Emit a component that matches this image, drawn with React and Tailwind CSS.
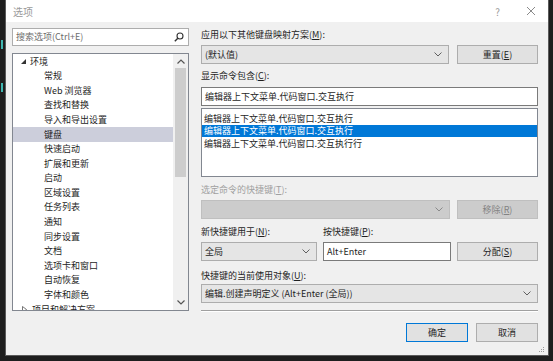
import React from 'react'

const font = { fontFamily: '"Noto Sans CJK SC", "Microsoft YaHei", sans-serif' }

const treeItems = [
  '常规',
  'Web 浏览器',
  '查找和替换',
  '导入和导出设置',
  '键盘',
  '快速启动',
  '扩展和更新',
  '启动',
  '区域设置',
  '任务列表',
  '通知',
  '同步设置',
  '文档',
  '选项卡和窗口',
  '自动恢复',
  '字体和颜色',
]

function Chevron({ color = '#606060' }) {
  return (
    <svg width="8" height="5" viewBox="0 0 8 5" className="shrink-0">
      <path d="M0.5 0.5 L4 4 L7.5 0.5" fill="none" stroke={color} strokeWidth="1" />
    </svg>
  )
}

function Combo({ children, className = '', disabled = false }) {
  return (
    <div
      className={`flex h-[19px] items-center justify-between border pl-[3px] pr-[6px] ${
        disabled ? 'border-[#bfbfbf] bg-[#cccccc]' : 'border-[#adadad] bg-[#e5e5e5]'
      } ${className}`}
    >
      <span className="truncate">{children}</span>
      <Chevron color={disabled ? '#8a8a8a' : '#606060'} />
    </div>
  )
}

function Button({ children, className = '', disabled = false, primary = false }) {
  return (
    <div
      className={`flex h-[19px] items-center justify-center border ${
        disabled
          ? 'border-[#bfbfbf] bg-[#cccccc] text-[#838383]'
          : primary
          ? 'border-[#0078d7] bg-[#e1e1e1]'
          : 'border-[#adadad] bg-[#e1e1e1]'
      } ${className}`}
    >
      {children}
    </div>
  )
}

function Label({ children, className = '', disabled = false }) {
  return (
    <div className={`h-[14px] leading-[14px] ${disabled ? 'text-[#a0a0a0]' : ''} ${className}`}>
      {children}
    </div>
  )
}

export default function App() {
  return (
    <div
      className="flex h-[361px] w-[553px] overflow-hidden bg-[#1e1e1e] text-[9px] text-[#1e1e1e]"
      style={font}
    >
      <div className="flex w-[5px] flex-col">
        <div className="ml-[1px] mt-[40px] h-[9px] w-[2px] bg-[#3fb6b0]" />
        <div className="ml-[1px] mt-[34px] h-[9px] w-[2px] bg-[#3fb6b0]" />
      </div>
      <div className="flex h-[356px] w-[544px] flex-col border-b border-l border-r border-[#5a5a5a]">
        {/* title bar */}
        <div className="flex h-[22px] items-center bg-white text-[#9a9a9a]">
          <span className="pl-[7px] text-[10px]">选项</span>
          <span className="ml-auto mr-[26px] text-[10px]">?</span>
          <svg width="10" height="10" viewBox="0 0 10 10" className="mr-[12px]">
            <path d="M1 1 L9 9 M9 1 L1 9" stroke="#8a8a8a" strokeWidth="1" />
          </svg>
        </div>

        {/* body */}
        <div className="flex flex-1 gap-[12px] bg-[#f0f0f0] pl-[6px] pr-[10px] pt-[6px]">
          {/* left column */}
          <div className="flex w-[177px] flex-col">
            <div className="flex h-[18px] items-center justify-between border border-[#adadad] bg-white pl-[3px] pr-[4px] text-[#6d6d6d]">
              <span>搜索选项(Ctrl+E)</span>
              <svg width="10" height="10" viewBox="0 0 10 10">
                <circle cx="6" cy="4" r="3" fill="none" stroke="#333" strokeWidth="1.1" />
                <path d="M3.8 6.2 L0.8 9.2" stroke="#333" strokeWidth="1.4" />
              </svg>
            </div>
            <div className="mt-[7px] flex h-[258px] border border-[#828790] bg-white">
              <div className="flex flex-1 flex-col overflow-hidden">
                <div className="flex h-[14.6px] shrink-0 items-center">
                  <svg width="5" height="5" viewBox="0 0 5 5" className="ml-[8px]">
                    <path d="M5 0 L5 5 L0 5 Z" fill="#333" />
                  </svg>
                  <span className="ml-[4px]">环境</span>
                </div>
                {treeItems.map((item) => (
                  <div
                    key={item}
                    className={`flex h-[14.6px] shrink-0 items-center pl-[31px] ${
                      item === '键盘' ? 'bg-[#cccedb]' : ''
                    }`}
                  >
                    {item}
                  </div>
                ))}
                <div className="flex h-[14.6px] shrink-0 items-center">
                  <svg width="5" height="7" viewBox="0 0 5 7" className="ml-[9px]">
                    <path d="M0.5 0.5 L4.5 3.5 L0.5 6.5 Z" fill="none" stroke="#555" strokeWidth="0.8" />
                  </svg>
                  <span className="ml-[5px]">项目和解决方案</span>
                </div>
              </div>
              {/* scrollbar */}
              <div className="flex w-[15px] flex-col items-center bg-[#f0f0f0]">
                <svg width="8" height="5" viewBox="0 0 8 5" className="mt-[5px]">
                  <path d="M0.5 4.5 L4 1 L7.5 4.5" fill="none" stroke="#555" strokeWidth="1.2" />
                </svg>
                <div className="mt-[4px] h-[109px] w-[11px] bg-[#cdcdcd]" />
                <svg width="8" height="5" viewBox="0 0 8 5" className="mb-[5px] mt-auto">
                  <path d="M0.5 0.5 L4 4 L7.5 0.5" fill="none" stroke="#555" strokeWidth="1.2" />
                </svg>
              </div>
            </div>
          </div>

          {/* right column */}
          <div className="flex w-[337px] flex-col">
            <Label>
              应用以下其他键盘映射方案(<u>M</u>):
            </Label>
            <div className="mt-[3px] flex gap-[8px]">
              <Combo className="w-[248px]">(默认值)</Combo>
              <Button className="w-[81px]">
                重置(<u>E</u>)
              </Button>
            </div>

            <Label className="mt-[5px]">
              显示命令包含(<u>C</u>):
            </Label>
            <div className="mt-[4px] flex h-[19px] items-center border border-[#7a7a7a] bg-white pl-[3px]">
              编辑器上下文菜单.代码窗口.交互执行
            </div>
            <div className="mt-[2px] flex h-[69px] flex-col border border-[#828790] bg-white pt-[3px]">
              <div className="flex h-[12.5px] items-center pl-[2px]">编辑器上下文菜单.代码窗口.交互执行</div>
              <div className="flex h-[12.5px] items-center bg-[#0078d7] pl-[2px] text-white">
                编辑器上下文菜单.代码窗口.交互执行
              </div>
              <div className="flex h-[12.5px] items-center pl-[2px]">编辑器上下文菜单.代码窗口.交互执行行</div>
            </div>

            <Label disabled className="mt-[6px]">
              选定命令的快捷键(<u>T</u>):
            </Label>
            <div className="mt-[3px] flex gap-[7px]">
              <Combo disabled className="w-[249px]" />
              <Button disabled className="w-[81px]">
                移除(<u>R</u>)
              </Button>
            </div>

            <div className="mt-[6px] flex">
              <Label className="w-[122px]">
                新快捷键用于(<u>N</u>):
              </Label>
              <Label>
                按快捷键(<u>P</u>):
              </Label>
            </div>
            <div className="mt-[3px] flex">
              <Combo className="w-[116px]">全局</Combo>
              <div className="ml-[6px] flex h-[19px] w-[128px] items-center border border-[#7a7a7a] bg-white pl-[3px]">
                Alt+Enter
              </div>
              <Button className="ml-[6px] w-[81px]">
                分配(<u>S</u>)
              </Button>
            </div>

            <Label className="mt-[8px]">
              快捷键的当前使用对象(<u>U</u>):
            </Label>
            <Combo className="mt-[1px]">编辑.创建声明定义 (Alt+Enter (全局))</Combo>

            <div className="mt-[7px] h-px bg-[#a0a0a0]" />
            <div className="h-px bg-white" />

            <div className="mt-[11px] flex justify-end gap-[8px]">
              <Button primary className="w-[62px]">
                确定
              </Button>
              <Button className="w-[62px]">取消</Button>
            </div>
            <div className="mt-[5px] flex justify-end pr-0">
              <svg width="6" height="6" viewBox="0 0 6 6" className="mr-[-7px]">
                <rect x="4" y="0" width="1" height="1" fill="#9a9a9a" />
                <rect x="2" y="2" width="1" height="1" fill="#9a9a9a" />
                <rect x="4" y="2" width="1" height="1" fill="#9a9a9a" />
                <rect x="0" y="4" width="1" height="1" fill="#9a9a9a" />
                <rect x="2" y="4" width="1" height="1" fill="#9a9a9a" />
                <rect x="4" y="4" width="1" height="1" fill="#9a9a9a" />
              </svg>
            </div>
          </div>
        </div>
      </div>
    </div>
  )
}
